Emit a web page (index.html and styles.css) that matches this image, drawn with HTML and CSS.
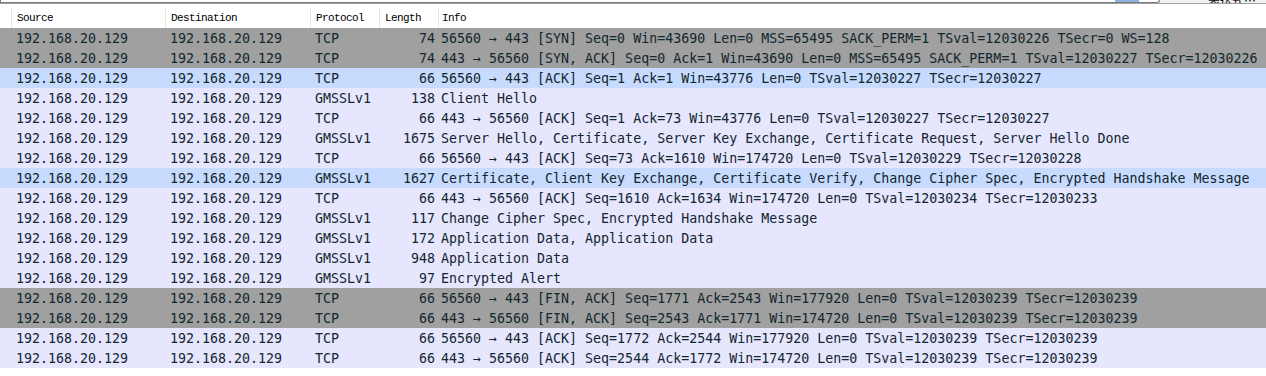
FILE: index.html
```html
<!DOCTYPE html>
<html lang="en">
  <head>
    <meta charset="UTF-8" />
    <title>Packet List</title>
    <link rel="stylesheet" href="styles.css">
  </head>
  <body>
    <div class="filter-bar">
      <div class="filter-box"><span class="apply"></span></div>
      <div class="expr">表达式…</div>
    </div>

    <div class="packet-list">
      <div class="row head">
        <span></span>
        <span>Source</span>
        <span>Destination</span>
        <span>Protocol</span>
        <span>Length</span>
        <span>Info</span>
      </div>

      <div class="row syn"><span></span><span>192.168.20.129</span><span>192.168.20.129</span><span>TCP</span><span class="len">74</span><span>56560 → 443 [SYN] Seq=0 Win=43690 Len=0 MSS=65495 SACK_PERM=1 TSval=12030226 TSecr=0 WS=128</span></div>
      <div class="row syn"><span></span><span>192.168.20.129</span><span>192.168.20.129</span><span>TCP</span><span class="len">74</span><span>443 → 56560 [SYN, ACK] Seq=0 Ack=1 Win=43690 Len=0 MSS=65495 SACK_PERM=1 TSval=12030227 TSecr=12030226</span></div>
      <div class="row sel"><span></span><span>192.168.20.129</span><span>192.168.20.129</span><span>TCP</span><span class="len">66</span><span>56560 → 443 [ACK] Seq=1 Ack=1 Win=43776 Len=0 TSval=12030227 TSecr=12030227</span></div>
      <div class="row tcp"><span></span><span>192.168.20.129</span><span>192.168.20.129</span><span>GMSSLv1</span><span class="len">138</span><span>Client Hello</span></div>
      <div class="row tcp"><span></span><span>192.168.20.129</span><span>192.168.20.129</span><span>TCP</span><span class="len">66</span><span>443 → 56560 [ACK] Seq=1 Ack=73 Win=43776 Len=0 TSval=12030227 TSecr=12030227</span></div>
      <div class="row tcp"><span></span><span>192.168.20.129</span><span>192.168.20.129</span><span>GMSSLv1</span><span class="len">1675</span><span>Server Hello, Certificate, Server Key Exchange, Certificate Request, Server Hello Done</span></div>
      <div class="row tcp"><span></span><span>192.168.20.129</span><span>192.168.20.129</span><span>TCP</span><span class="len">66</span><span>56560 → 443 [ACK] Seq=73 Ack=1610 Win=174720 Len=0 TSval=12030229 TSecr=12030228</span></div>
      <div class="row sel"><span></span><span>192.168.20.129</span><span>192.168.20.129</span><span>GMSSLv1</span><span class="len">1627</span><span>Certificate, Client Key Exchange, Certificate Verify, Change Cipher Spec, Encrypted Handshake Message</span></div>
      <div class="row tcp"><span></span><span>192.168.20.129</span><span>192.168.20.129</span><span>TCP</span><span class="len">66</span><span>443 → 56560 [ACK] Seq=1610 Ack=1634 Win=174720 Len=0 TSval=12030234 TSecr=12030233</span></div>
      <div class="row tcp"><span></span><span>192.168.20.129</span><span>192.168.20.129</span><span>GMSSLv1</span><span class="len">117</span><span>Change Cipher Spec, Encrypted Handshake Message</span></div>
      <div class="row tcp"><span></span><span>192.168.20.129</span><span>192.168.20.129</span><span>GMSSLv1</span><span class="len">172</span><span>Application Data, Application Data</span></div>
      <div class="row tcp"><span></span><span>192.168.20.129</span><span>192.168.20.129</span><span>GMSSLv1</span><span class="len">948</span><span>Application Data</span></div>
      <div class="row tcp"><span></span><span>192.168.20.129</span><span>192.168.20.129</span><span>GMSSLv1</span><span class="len">97</span><span>Encrypted Alert</span></div>
      <div class="row syn"><span></span><span>192.168.20.129</span><span>192.168.20.129</span><span>TCP</span><span class="len">66</span><span>56560 → 443 [FIN, ACK] Seq=1771 Ack=2543 Win=177920 Len=0 TSval=12030239 TSecr=12030239</span></div>
      <div class="row syn"><span></span><span>192.168.20.129</span><span>192.168.20.129</span><span>TCP</span><span class="len">66</span><span>443 → 56560 [FIN, ACK] Seq=2543 Ack=1771 Win=174720 Len=0 TSval=12030239 TSecr=12030239</span></div>
      <div class="row tcp"><span></span><span>192.168.20.129</span><span>192.168.20.129</span><span>TCP</span><span class="len">66</span><span>56560 → 443 [ACK] Seq=1772 Ack=2544 Win=177920 Len=0 TSval=12030239 TSecr=12030239</span></div>
      <div class="row tcp"><span></span><span>192.168.20.129</span><span>192.168.20.129</span><span>TCP</span><span class="len">66</span><span>443 → 56560 [ACK] Seq=2544 Ack=1772 Win=174720 Len=0 TSval=12030239 TSecr=12030239</span></div>
    </div>
  </body>
</html>
```

FILE: styles.css
```css
* {
  margin: 0;
  padding: 0;
  box-sizing: border-box;
}

body {
  background: #fff;
  width: 1266px;
  height: 376px;
  overflow: hidden;
}

/* tail of the display filter toolbar, mostly scrolled off */
.filter-bar {
  display: flex;
  height: 3px;
  overflow: hidden;
  background: #f0f0f0;
}

.filter-box {
  flex: 1;
  margin-right: 48px;
  border: 1px solid #7a7a7a;
  border-top: none;
  border-radius: 0 0 3px 0;
  background: #fff;
  position: relative;
}

.filter-box .apply {
  position: absolute;
  right: 20px;
  bottom: 0;
  width: 24px;
  height: 3px;
  background: #8fb1dd;
}

.expr {
  width: 58px;
  font-family: "Noto Sans CJK SC", sans-serif;
  font-size: 12px;
  line-height: 1px;
  color: #000;
}

.packet-list {
  border-top: 1px solid #a0a0a0;
}

.row {
  display: grid;
  grid-template-columns: 11px 154px 145px 69px 59px 1fr;
  height: 20px;
  align-items: center;
  font-family: "DejaVu Sans Mono", monospace;
  font-size: 13.3px;
  color: #12272e;
  white-space: nowrap;
}

.row span {
  padding-left: 5px;
  overflow: hidden;
}

.row span.len {
  text-align: right;
  padding-right: 3px;
}

.row span:last-child {
  padding-left: 3px;
  overflow: visible;
}

.head {
  height: 24px;
  padding-top: 4px;
  background: #fff;
  font-family: "Liberation Mono", monospace;
  font-size: 11px;
  letter-spacing: -0.6px;
  color: #000;
  align-items: stretch;
}

.head span {
  border-left: 1px solid #e5e5e5;
  display: flex;
  align-items: center;
}

.head span:first-child {
  border-left: none;
}

.syn {
  background: #a0a0a0;
}

.tcp {
  background: #e7e6ff;
}

.sel {
  background: #c7dbfe;
}
```
